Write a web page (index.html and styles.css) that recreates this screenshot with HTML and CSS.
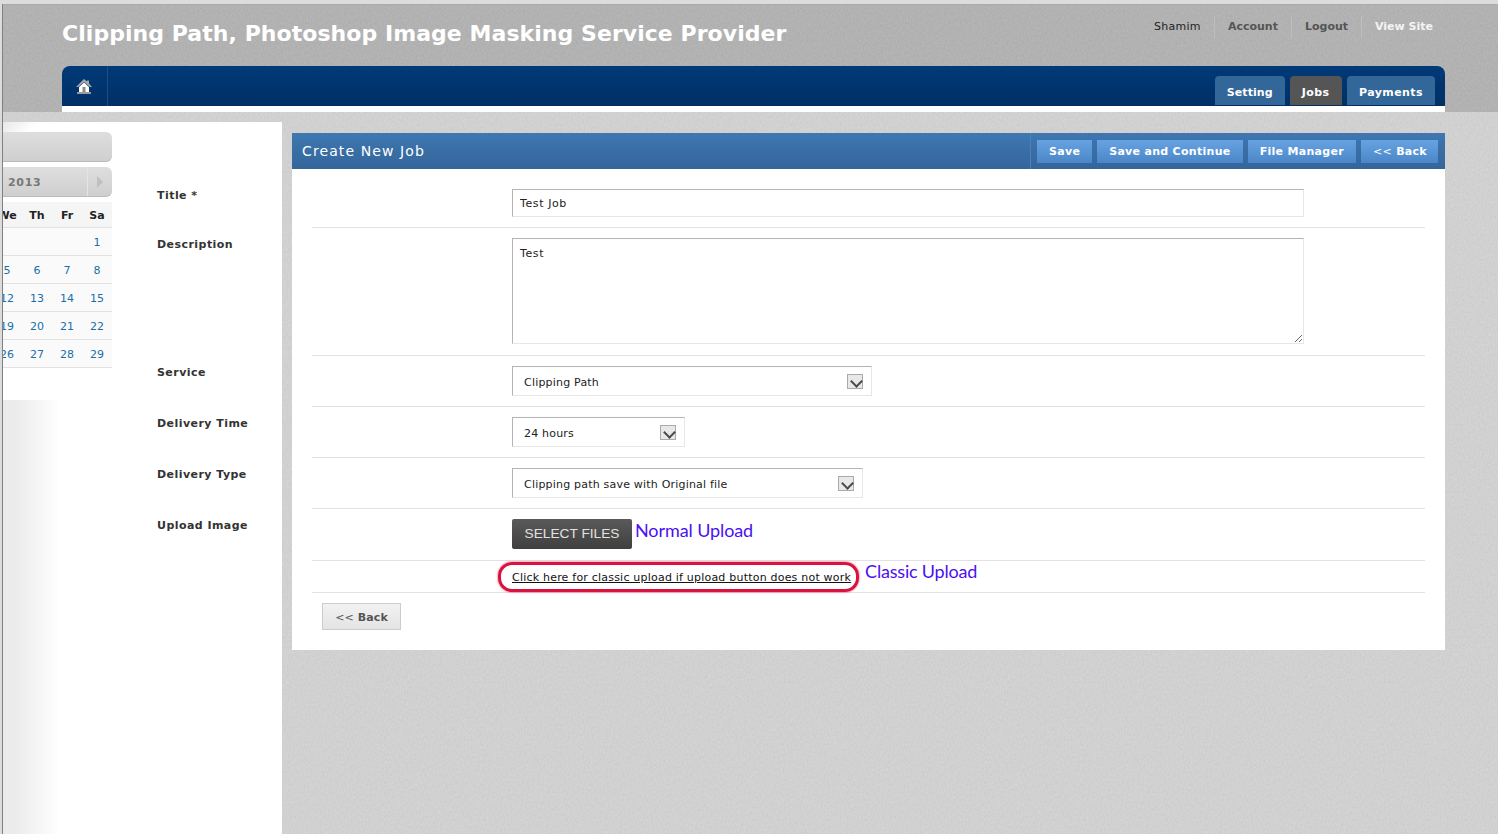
FILE: index.html
```html
<!DOCTYPE html>
<html lang="en">
<head>
  <meta charset="UTF-8">
  <meta name="viewport" content="width=device-width, initial-scale=1.0">
  <link rel="stylesheet" href="styles.css">
  <title>Create New Job</title>
</head>
<body>
  <div class="page">
    <div class="header">
      <div class="top-row">
        <h1>Clipping Path, Photoshop Image Masking Service Provider</h1>
        <ul class="user-menu">
          <li class="user-name">Shamim</li>
          <li><a href="#">Account</a></li>
          <li><a href="#">Logout</a></li>
          <li><a href="#" class="view-site">View Site</a></li>
        </ul>
      </div>
      <div class="nav">
        <a href="#" class="home-link">
          <svg width="16" height="15" viewBox="0 0 16 15">
            <path d="M8 0 L11 2.5 V1.5 H13 V4.5 L16 8 H14 L8 3 L2 8 H0 Z" fill="#a8a8a8"/>
            <path d="M3 8 L8 3.5 L13 8 V13 H3 Z" fill="#fff"/>
            <rect x="6.5" y="8" width="3" height="5" fill="#8c8c8c"/>
            <rect x="1" y="13" width="14" height="2" fill="#9a9a9a"/>
          </svg>
        </a>
        <div class="tabs">
          <a href="#" class="tab tab-setting">Setting</a>
          <a href="#" class="tab active">Jobs</a>
          <a href="#" class="tab">Payments</a>
        </div>
      </div>
    </div>

    <div class="content">
      <div class="sidebar">
        <div class="cal-col">
          <div class="cal-bar"></div>
          <div class="cal-bar cal-month">
            <span class="cal-year">2013</span>
            <span class="cal-next"></span>
          </div>
          <div class="cal-table">
            <div class="cal-head">We</div><div class="cal-head">Th</div><div class="cal-head">Fr</div><div class="cal-head">Sa</div>
            <div></div><div></div><div></div><div>1</div>
            <div>5</div><div>6</div><div>7</div><div>8</div>
            <div>12</div><div>13</div><div>14</div><div>15</div>
            <div>19</div><div>20</div><div>21</div><div>22</div>
            <div>26</div><div>27</div><div>28</div><div>29</div>
          </div>
          <div class="cal-fade"></div>
        </div>
        <div class="labels">
          <label>Title *</label>
          <label class="label-tall">Description</label>
          <label>Service</label>
          <label>Delivery Time</label>
          <label>Delivery Type</label>
          <label>Upload Image</label>
        </div>
      </div>

      <div class="main">
        <div class="panel">
          <div class="panel-head">
            <h2>Create New Job</h2>
            <div class="panel-actions">
              <a href="#" class="btn">Save</a>
              <a href="#" class="btn">Save and Continue</a>
              <a href="#" class="btn">File Manager</a>
              <a href="#" class="btn"><span class="thin">&lt;&lt;</span> Back</a>
            </div>
          </div>
          <div class="panel-body">
            <div class="row"><input type="text" class="field" value="Test Job"></div>
            <div class="row"><textarea class="field field-area">Test</textarea></div>
            <div class="row">
              <div class="select select-service"><span>Clipping Path</span><i class="arrow"></i></div>
            </div>
            <div class="row">
              <div class="select select-time"><span>24 hours</span><i class="arrow"></i></div>
            </div>
            <div class="row">
              <div class="select select-type"><span>Clipping path save with Original file</span><i class="arrow"></i></div>
            </div>
            <div class="row row-upload">
              <a href="#" class="select-files">SELECT FILES</a>
              <span class="note">Normal Upload</span>
            </div>
            <div class="row row-classic">
              <span class="classic-ring"><a href="#">Click here for classic upload if upload button does not work</a></span>
              <span class="note note-classic">Classic Upload</span>
            </div>
            <a href="#" class="back-btn"><span class="thin">&lt;&lt;</span> Back</a>
          </div>
        </div>
      </div>
    </div>
  </div>
</body>
</html>
```

FILE: styles.css
```css
* {
  box-sizing: border-box;
}
html, body {
  margin: 0;
  padding: 0;
  height: 100%;
}
body {
  font-family: 'DejaVu Sans', Verdana, sans-serif;
  font-size: 11px;
  color: #333;
  background-color: #dcdcdc;
  overflow: hidden;
}
a {
  text-decoration: none;
  color: inherit;
}
.thin {
  font-weight: normal;
}
.page {
  height: 830px;
  margin-top: 4px;
  margin-left: 2px;
  border-left: 1px solid #808080;
  background-color: #d4d4d4;
  background-image: url("data:image/svg+xml,%3Csvg xmlns='http://www.w3.org/2000/svg' width='300' height='300'%3E%3Cfilter id='n'%3E%3CfeTurbulence type='fractalNoise' baseFrequency='.7 .4' numOctaves='2' stitchTiles='stitch'/%3E%3CfeColorMatrix values='0 0 0 0 .4 0 0 0 0 .4 0 0 0 0 .4 0 0 0 .4 -.12'/%3E%3C/filter%3E%3Crect width='300' height='300' filter='url(%23n)'/%3E%3C/svg%3E");
  display: flex;
  flex-direction: column;
}

/* header */
.header {
  height: 108px;
  padding: 0 53px 0 59px;
  border-top: 1px solid #aaa;
  background-color: #b6b6b6;
  background-image: url("data:image/svg+xml,%3Csvg xmlns='http://www.w3.org/2000/svg' width='300' height='300'%3E%3Cfilter id='n'%3E%3CfeTurbulence type='fractalNoise' baseFrequency='.7 .4' numOctaves='2' stitchTiles='stitch'/%3E%3CfeColorMatrix values='0 0 0 0 .3 0 0 0 0 .3 0 0 0 0 .3 0 0 0 .5 -.12'/%3E%3C/filter%3E%3Crect width='300' height='300' filter='url(%23n)'/%3E%3C/svg%3E");
}
.top-row {
  height: 61px;
  display: flex;
  justify-content: space-between;
}
h1 {
  margin: 14px 0 0;
  font-size: 22px;
  line-height: 30px;
  color: #fff;
  letter-spacing: 0.05px;
}
.user-menu {
  list-style: none;
  margin: 11px -1px 0 0;
  padding: 0;
  display: flex;
  height: 22px;
}
.user-menu li {
  padding: 0 13px;
  border-right: 1px solid #bdbdbd;
  line-height: 22px;
  letter-spacing: 0;
  font-weight: bold;
  color: #555;
}
.user-menu li:last-child {
  border-right: none;
}
.user-menu .user-name {
  font-weight: normal;
  letter-spacing: 0.3px;
  color: #222;
}
.view-site {
  color: #f4f4f4;
}
.nav {
  height: 46px;
  border-top-left-radius: 8px;
  border-top-right-radius: 8px;
  background: linear-gradient(#003a78, #002f66);
  border-bottom: 6px solid #fff;
  display: flex;
  justify-content: space-between;
}
.home-link {
  width: 46px;
  padding: 1px 2px 0 0;
  border-right: 1px solid #1f4d80;
  display: flex;
  align-items: center;
  justify-content: center;
}
.tabs {
  display: flex;
  align-items: flex-end;
  gap: 5px;
  padding-right: 10px;
}
.tab {
  height: 29px;
  margin-bottom: 1px;
  padding: 0 12px;
  border-radius: 4px 4px 0 0;
  background-color: #336699;
  color: #fff;
  font-weight: bold;
  line-height: 33px;
  letter-spacing: 0.42px;
}
.tab-setting {
  letter-spacing: 0.1px;
}
.tab.active {
  padding: 0 12.5px 0 12px;
  background-color: #555;
}

/* left column */
.content {
  flex: 1;
  padding-top: 10px;
  display: flex;
  align-items: stretch;
}
.sidebar {
  width: 279px;
  background-color: #fff;
  display: flex;
}
.cal-col {
  width: 109px;
  padding-top: 10px;
  display: flex;
  flex-direction: column;
  overflow: hidden;
  background: linear-gradient(135deg, #e8e8e8, #fff 25px);
}
.cal-bar {
  height: 30px;
  margin-bottom: 5px;
  border-radius: 0 6px 6px 0;
  border-bottom: 1px solid #bbb;
  background: linear-gradient(#dedede, #cfcfcf);
}
.cal-month {
  display: flex;
  justify-content: space-between;
  align-items: center;
}
.cal-year {
  padding: 1px 0 0 5px;
  font-weight: bold;
  color: #777;
  letter-spacing: 0.7px;
}
.cal-next {
  width: 25px;
  height: 100%;
  border-left: 1px solid #e4e4e4;
  position: relative;
}
.cal-next::after {
  content: "";
  position: absolute;
  left: 9px;
  top: 9px;
  border-left: 6px solid #c0c0c0;
  border-top: 6px solid transparent;
  border-bottom: 6px solid transparent;
}
.cal-table {
  width: 120px;
  margin-left: -11px;
  display: grid;
  grid-template-columns: repeat(4, 30px);
  grid-template-rows: 26px;
  grid-auto-rows: 28px;
  color: #1a6fa8;
  background-color: #fafafa;
}
.cal-table div {
  border-bottom: 1px solid #e2e2e2;
  text-align: center;
  line-height: 29px;
}
.cal-table .cal-head {
  height: 26px;
  line-height: 27px;
  font-weight: bold;
  color: #222;
  background-color: #f5f5f5;
}
.cal-fade {
  flex: 1;
  width: 57px;
  margin-top: 32px;
  background: linear-gradient(to right, #ebebeb, #ebebeb 20%, #fff);
}
.labels {
  margin-left: 45px;
  padding-top: 66px;
  display: flex;
  flex-direction: column;
}
.labels label {
  height: 51px;
  font-weight: bold;
  letter-spacing: 0.45px;
  line-height: 16px;
}
.labels label:first-child {
  height: 49px;
}
.labels .label-tall {
  height: 128px;
}

/* main panel */
.main {
  flex: 1;
  padding: 11px 53px 0 10px;
}
.panel {
  background-color: #fff;
}
.panel-head {
  height: 36px;
  padding: 0 7px 0 10px;
  background: linear-gradient(#3f77b1, #33659a);
  display: flex;
  justify-content: space-between;
  align-items: center;
}
h2 {
  margin: 0;
  font-size: 14px;
  font-weight: normal;
  color: #fff;
  letter-spacing: 1.1px;
}
.panel-actions {
  height: 36px;
  padding-left: 6px;
  border-left: 1px solid #4d82b8;
  display: flex;
  align-items: center;
  gap: 5px;
}
.btn {
  height: 23px;
  padding: 0 12px;
  background: linear-gradient(#67a2e2, #4b87c8);
  color: #fff;
  font-weight: bold;
  line-height: 24px;
  letter-spacing: 0.3px;
}
.btn:last-child {
  padding-right: 11px;
}
.panel-body {
  padding: 10px 20px 20px;
}
.row {
  padding: 10px 0 10px 200px;
  border-bottom: 1px solid #e2e2e2;
  display: flex;
}
.field {
  display: block;
  width: 792px;
  height: 28px;
  padding: 1px 7px 0;
  border: 1px solid #e6e6e6;
  border-top-color: #b4b4b4;
  border-left-color: #b4b4b4;
  font-family: inherit;
  font-size: 11px;
  letter-spacing: 0.6px;
  color: #222;
}
.field-area {
  height: 106px;
  margin-bottom: 1px;
  padding-top: 8px;
}
.select {
  height: 30px;
  padding: 0 8px 0 11px;
  border: 1px solid #e6e6e6;
  border-top-color: #b4b4b4;
  border-left-color: #b4b4b4;
  display: flex;
  justify-content: space-between;
  align-items: center;
  letter-spacing: 0.2px;
  color: #222;
}
.select span {
  margin-top: 2px;
}
.select-service {
  width: 360px;
}
.select-time {
  width: 173px;
}
.select-type {
  width: 351px;
}
.arrow {
  width: 16px;
  height: 15px;
  border: 1px solid #aaa;
  background-color: #e8e8e8;
  position: relative;
}
.arrow::after {
  content: "";
  position: absolute;
  left: 3.5px;
  top: 2px;
  width: 7px;
  height: 7px;
  border-right: 2px solid #4a4a4a;
  border-bottom: 2px solid #4a4a4a;
  transform: rotate(45deg);
}
.row-upload {
  padding-bottom: 11px;
  align-items: flex-start;
}
.select-files {
  width: 120px;
  height: 30px;
  border-radius: 2px;
  background: linear-gradient(#5a5a5a, #3f3f3f);
  font-family: 'Liberation Sans', Arial, sans-serif;
  font-size: 13.7px;
  line-height: 29px;
  text-align: center;
  color: #e2e2e2;
}
.note {
  margin-left: 3px;
  margin-top: -2px;
  font-family: 'Lato', sans-serif;
  font-size: 18px;
  letter-spacing: -0.1px;
  line-height: 26px;
  color: #4a0ff2;
}
.row-classic {
  height: 32px;
  padding-top: 1px;
  padding-bottom: 0;
  align-items: flex-start;
}
.classic-ring {
  height: 30px;
  margin-left: -14px;
  padding: 0 5px 0 11px;
  border: 3px solid #d9123f;
  border-radius: 14px;
  box-shadow: 0 0 2px #d9123f;
  line-height: 25px;
  color: #111;
  letter-spacing: 0.21px;
  white-space: nowrap;
}
.classic-ring a {
  text-decoration: underline;
}
.note-classic {
  margin-left: 6px;
  margin-top: -4px;
  letter-spacing: -0.2px;
}
.back-btn {
  display: block;
  width: 79px;
  height: 27px;
  margin: 10px 0 0 10px;
  border: 1px solid #ccc;
  background: linear-gradient(#f2f2f2, #e4e4e4);
  text-align: center;
  line-height: 27px;
  font-weight: bold;
  letter-spacing: 0.1px;
  color: #555;
}
```
